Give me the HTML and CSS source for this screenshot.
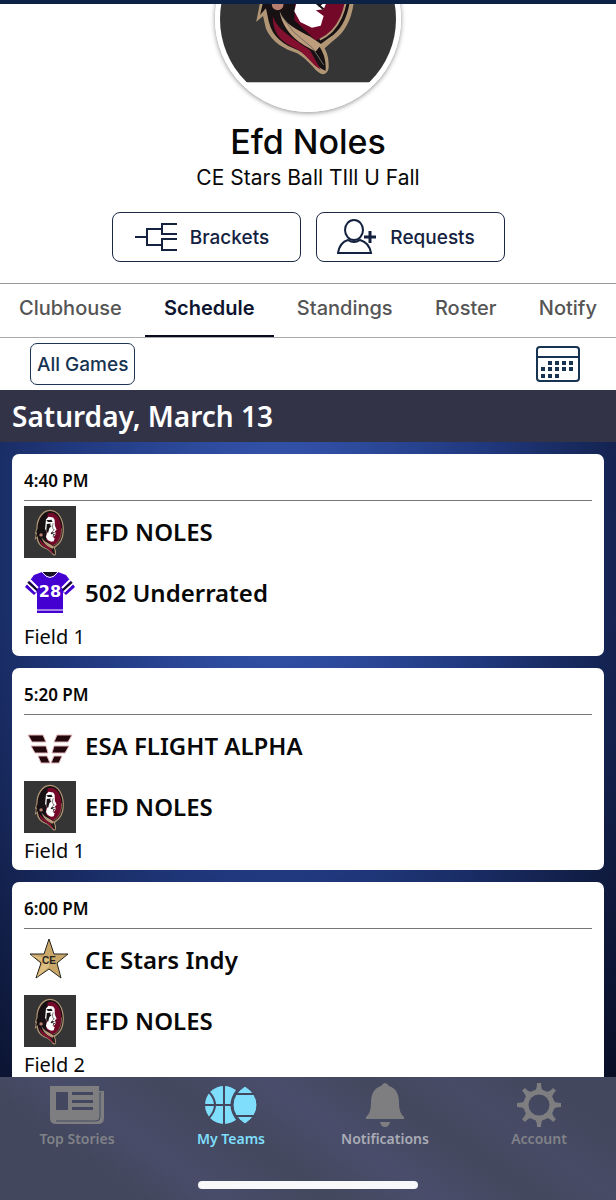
FILE: index.html
```html
<!DOCTYPE html>
<html lang="en">
<head>
    <meta charset="UTF-8">
    <meta name="viewport" content="width=device-width, initial-scale=1.0">
    <title>Efd Noles - Schedule</title>
    <link rel="stylesheet" href="styles.css">
</head>
<body>
    <svg class="defs" width="0" height="0" aria-hidden="true">
        <symbol id="noles" viewBox="0 0 180 180">
            <rect width="180" height="180" fill="#353535"/>
            <path d="M90 13C120 13 138 46 138 80C138 106 132 126 116 137L107 145Q112 154 111 166Q109 173 103 171C96 167 91 157 79 150C66 146 53 139 47 125L44 112L37 118L41 98L38 94L43 78C42 45 62 13 90 13Z" fill="#b09674"/>
            <path d="M90 17C118 17 134 48 134 80C134 105 127 125 112 134L101 142Q109 153 108 168C99 165 93 153 80 147C65 141 54 134 50 118L47 104L41 111L45 93L42 91L47 78C46 48 66 17 90 17Z" fill="#171114"/>
            <path d="M82 25C112 15 130 48 130 80C130 105 124 124 106 133L98 137L76 116L79 55Z" fill="#730829"/>
            <path d="M130 77C131 104 122 127 102 136" fill="none" stroke="#b09674" stroke-width="2"/>
            <path d="M76 47L85 37L101 40L106 48L107 68L113 82L107 87L110 96L106 105L98 106L106 112L103 122L94 124L82 118L76 107L80 91L73 80Z" fill="#fff"/>
            <path d="M77 49L95 48L99 55L83 55ZM79 62L93 61L90 67L96 69L88 76L83 94L77 86ZM107 80L97 91L108 91L96 98L92 95L102 83ZM101 99L108 97L101 103Z" fill="#171114"/>
            <path d="M101 60C96 75 101 82 105 83M109 97L100 100L106 105" fill="none" stroke="#171114" stroke-width="2"/>
            <path d="M61 107C66 121 80 126 92 133L104 141L98 148C78 139 64 126 61 107Z" fill="#bd9d7c"/>
            <path d="M54 112C58 126 75 135 92 147L103 167C93 161 91 154 79 146C64 139 54 132 54 112Z" fill="#84102f"/>
            <path d="M63 112L75 128L95 145L106 162" fill="none" stroke="#746f66" stroke-width="1"/>
            <circle cx="59" cy="100" r="6" fill="#b87f70"/>
        </symbol>
    </svg>

    <div class="status-bar"></div>

    <header class="team-header">
        <div class="avatar-crop">
            <div class="avatar">
                <svg viewBox="0 25 180 180" role="img" aria-label="Efd Noles logo">
                    <use href="#noles" width="180" height="180"/>
                </svg>
            </div>
        </div>
        <h1>Efd Noles</h1>
        <p class="subtitle">CE Stars Ball TIll U Fall</p>
        <div class="actions">
            <button class="action" type="button">
                <svg width="42" height="30" viewBox="0 0 42 30" fill="none" stroke="#14213f" stroke-width="2">
                    <path d="M0 15H12M27 7H12V23H27M42 2H27V12H42M42 17H27V28H42"/>
                </svg>
                Brackets
            </button>
            <button class="action" type="button">
                <svg width="40" height="36" viewBox="0 0 40 36" fill="none" stroke="#14213f" stroke-width="2">
                    <ellipse cx="17" cy="11" rx="9" ry="10"/>
                    <path d="M11 21C4 23 2 28 1 34H34C33 28 30 23 23 21Q17 25 11 21Z"/>
                    <path d="M27 18H39M33 12V24" stroke-width="3"/>
                </svg>
                Requests
            </button>
        </div>
    </header>

    <nav class="tabs">
        <a href="#">Clubhouse</a>
        <a href="#" class="active">Schedule</a>
        <a href="#">Standings</a>
        <a href="#">Roster</a>
        <a href="#">Notify</a>
    </nav>

    <div class="filter-bar">
        <button class="filter" type="button">All Games</button>
        <button class="calendar" type="button" aria-label="Calendar">
            <svg width="44" height="36" viewBox="0 0 44 36" fill="none" stroke="#163452" stroke-width="2">
                <rect x="1" y="1" width="42" height="34" rx="3"/>
                <path d="M1 11H43"/>
                <path d="M12 17H40M5 23H40M5 30H26" stroke-width="4" stroke-dasharray="4 3"/>
            </svg>
        </button>
    </div>

    <h2 class="date">Saturday, March 13</h2>

    <main class="games">
        <article class="game">
            <div class="time">4:40 PM</div>
            <div class="team">
                <svg class="logo"><use href="#noles"/></svg>
                <span>EFD NOLES</span>
            </div>
            <div class="team">
                <svg class="logo" viewBox="0 0 52 52">
                    <path d="M18 5L10 8L1 20L10 28L13 25V46H39V25L42 28L51 20L42 8L34 5Z" fill="#4300d1"/>
                    <path d="M19 5Q26 14 33 5Z" fill="#151020"/>
                    <path d="M18 5Q26 16 34 5" fill="none" stroke="#fff"/>
                    <path d="M3 16L12 25M6 13L14 21M49 16L40 25M46 13L38 21" stroke="#fff" stroke-width="2"/>
                    <path d="M4 15L13 23M48 15L39 23" stroke="#151020" stroke-width="2"/>
                    <path d="M13 43H39" stroke="#fff"/>
                    <text class="jersey-number" x="26" y="30" text-anchor="middle">28</text>
                </svg>
                <span>502 Underrated</span>
            </div>
            <div class="field">Field 1</div>
        </article>

        <article class="game">
            <div class="time">5:20 PM</div>
            <div class="team">
                <svg class="logo" viewBox="0 0 52 52" fill="#24070d" stroke="#e0b4b8" stroke-width="1">
                    <path d="M4 15H19L22 22H8ZM48 15H33L30 22H44ZM7 26H22L24 33H11ZM45 26H30L28 33H41ZM14 36H23L26 43H17ZM38 36H30L27 43H35Z"/>
                </svg>
                <span>ESA FLIGHT ALPHA</span>
            </div>
            <div class="team">
                <svg class="logo"><use href="#noles"/></svg>
                <span>EFD NOLES</span>
            </div>
            <div class="field">Field 1</div>
        </article>

        <article class="game">
            <div class="time">6:00 PM</div>
            <div class="team">
                <svg class="logo" viewBox="0 0 52 52">
                    <path d="M25 5L30 20H44L33 29L37 44L25 35L12 44L17 29L6 20H20Z" fill="#c9a768" stroke="#27231e"/>
                    <path d="M25 7V25L7 21L19 28L13 43L25 33Z" fill="#ddbf82"/>
                    <text class="star-text" x="25" y="30" text-anchor="middle">CE</text>
                </svg>
                <span>CE Stars Indy</span>
            </div>
            <div class="team">
                <svg class="logo"><use href="#noles"/></svg>
                <span>EFD NOLES</span>
            </div>
            <div class="field">Field 2</div>
        </article>
    </main>

    <nav class="bottom-nav">
        <div class="nav-items">
            <a href="#">
                <svg width="54" height="44" viewBox="0 0 54 44">
                    <path d="M0 3H49V8H54V35Q54 41 48 41H6Q0 41 0 35Z" fill="#7e7e80"/>
                    <path d="M6 9H18V27H6ZM22 9H43V12H22ZM22 17H43V20H22ZM22 24H43V27H22Z" fill="#434860"/>
                    <path d="M50 9V34Q50 38 46 38H6" fill="none" stroke="#434860"/>
                </svg>
                Top Stories
            </a>
            <a href="#" class="active">
                <svg width="54" height="44" viewBox="0 0 54 44">
                    <circle cx="20" cy="22" r="19" fill="#7fdefc"/>
                    <path d="M20 2V42M0 22H29M5 9Q17 22 5 35" fill="none" stroke="#434860" stroke-width="2"/>
                    <path d="M34 7Q22 22 34 37" fill="none" stroke="#434860" stroke-width="3"/>
                    <path d="M41 3Q53 11 53 22Q53 33 41 41Q29 33 29 22Q29 11 41 3Z" fill="#7fdefc" stroke="#434860" stroke-width="1"/>
                    <path d="M30 11H52M30 33H52" stroke="#434860" stroke-width="2"/>
                </svg>
                My Teams
            </a>
            <a href="#" class="bright">
                <svg width="54" height="44" viewBox="0 0 54 44" fill="#7e7e80">
                    <path d="M23 3Q27 -3 31 3Q41 6 41 20Q41 30 46 34V36H8V34Q13 30 13 20Q13 6 23 3ZM22 39H32Q31 44 27 44Q23 44 22 39Z"/>
                </svg>
                Notifications
            </a>
            <a href="#">
                <svg width="54" height="44" viewBox="0 0 54 44">
                    <circle cx="27" cy="22" r="13" fill="none" stroke="#7e7e80" stroke-width="5"/>
                    <g fill="#7e7e80">
                        <path id="tooth" d="M22 8Q25 7 25 0H29Q29 7 32 8Z"/>
                        <use href="#tooth" transform="rotate(45 27 22)"/>
                        <use href="#tooth" transform="rotate(90 27 22)"/>
                        <use href="#tooth" transform="rotate(135 27 22)"/>
                        <use href="#tooth" transform="rotate(180 27 22)"/>
                        <use href="#tooth" transform="rotate(225 27 22)"/>
                        <use href="#tooth" transform="rotate(270 27 22)"/>
                        <use href="#tooth" transform="rotate(315 27 22)"/>
                    </g>
                </svg>
                Account
            </a>
        </div>
        <div class="home-indicator"></div>
    </nav>
</body>
</html>
```
FILE: styles.css
```css
* {
    box-sizing: border-box;
}
body {
    display: flex;
    flex-direction: column;
    height: 100vh;
    margin: 0;
    overflow: hidden;
    background-color: #fff;
    color: #080808;
    font-family: Inter, sans-serif;
}
h1, h2, p {
    margin: 0;
    font-weight: 500;
}
a {
    color: inherit;
    text-decoration: none;
}
button {
    padding: 0;
    background: none;
    border: 0;
    color: #14213f;
    font-family: inherit;
}
svg {
    display: block;
    flex-shrink: 0;
}
.defs {
    position: absolute;
}
.status-bar {
    flex-shrink: 0;
    height: 4px;
    background-color: #0c2146;
}

/* team header */
.team-header {
    flex-shrink: 0;
    text-align: center;
}
.avatar-crop {
    display: flex;
    align-items: flex-end;
    justify-content: center;
    height: 116px;
    padding-bottom: 8px;
    overflow: hidden;
}
.avatar {
    flex-shrink: 0;
    width: 186px;
    height: 186px;
    border: 5px solid #fff;
    border-radius: 50%;
    box-shadow: 0 1px 5px rgba(0, 0, 0, 0.45);
    overflow: hidden;
}
.avatar svg {
    width: 100%;
    height: 100%;
}
h1 {
    font-size: 34px;
    line-height: 44px;
}
.subtitle {
    font-size: 21px;
    font-weight: 400;
    line-height: 28px;
}
.actions {
    display: flex;
    justify-content: center;
    gap: 15px;
    padding: 20px 0 21px;
}
.action {
    display: flex;
    align-items: center;
    justify-content: center;
    gap: 13px;
    width: 189px;
    height: 50px;
    padding-right: 8px;
    border: 1px solid #1b2745;
    border-radius: 8px;
    font-size: 19px;
    font-weight: 500;
}

/* tabs */
.tabs {
    display: flex;
    flex-shrink: 0;
    justify-content: space-between;
    height: 55px;
    border-top: 1px solid #999;
    border-bottom: 1px solid #aaa;
    color: #555;
    font-size: 20px;
    font-weight: 500;
    line-height: 48px;
}
.tabs a {
    padding: 0 19px;
}
.tabs .active {
    border-bottom: 2px solid #080b20;
    color: #0d1430;
    font-weight: 600;
}

.filter-bar {
    display: flex;
    flex-shrink: 0;
    align-items: center;
    justify-content: space-between;
    height: 52px;
    padding: 0 36px 0 30px;
}
.filter {
    height: 42px;
    padding: 0 6px;
    border: 1px solid #1c3554;
    border-radius: 7px;
    color: #163452;
    font-size: 19px;
    font-weight: 500;
}

/* schedule */
.date {
    flex-shrink: 0;
    padding: 0 12px;
    background-color: #333348;
    color: #fff;
    font-family: "Noto Sans", sans-serif;
    font-size: 28px;
    font-weight: 600;
    line-height: 52px;
}
.games {
    display: flex;
    flex: 1;
    flex-direction: column;
    gap: 12px;
    min-height: 0;
    padding: 12px;
    overflow: hidden;
    background: radial-gradient(ellipse at 45% 15%, #3759b5, #20387d 45%, #101c42 80%, #080e25);
    font-family: "Noto Sans", sans-serif;
}
.game {
    flex-shrink: 0;
    height: 202px;
    padding: 0 12px;
    background-color: #fff;
    border-radius: 7px;
}
.time {
    height: 47px;
    border-bottom: 1px solid #777;
    font-size: 17px;
    font-weight: 600;
    line-height: 54px;
}
.team {
    display: flex;
    align-items: center;
    gap: 9px;
    height: 61px;
    font-size: 24px;
    font-weight: 600;
}
.logo {
    width: 52px;
    height: 52px;
}
.jersey-number {
    fill: #fff;
    font: 700 16px "DejaVu Sans", sans-serif;
}
.star-text {
    fill: #27231e;
    font: 700 10px "Liberation Sans", sans-serif;
}
.field {
    padding-top: 2px;
    font-size: 20px;
    line-height: 24px;
}

/* bottom navigation */
.bottom-nav {
    flex-shrink: 0;
    height: 123px;
    padding-top: 6px;
    background: linear-gradient(35deg, #42475d 0 18%, #484c69 28%, #43485e 42%, #494d6b 55%, #43485e 68%, #474b66 78%, #42475d 90%);
    color: #808288;
    font-family: "Noto Sans", sans-serif;
    font-size: 14px;
    font-weight: 600;
}
.nav-items {
    display: grid;
    grid-template-columns: repeat(4, 1fr);
}
.nav-items a {
    display: flex;
    flex-direction: column;
    align-items: center;
    line-height: 24px;
}
.nav-items .active {
    color: #7fdefc;
}
.nav-items .bright {
    color: #aaacb5;
}
.home-indicator {
    width: 220px;
    height: 8px;
    margin: 30px auto 0;
    background-color: #f8f8fa;
    border-radius: 4px;
}
```
